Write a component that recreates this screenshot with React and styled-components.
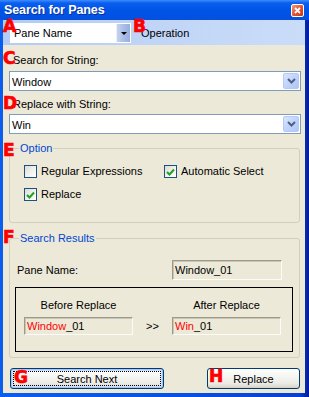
import styled, { createGlobalStyle } from "styled-components"

const GlobalStyle = createGlobalStyle`
  body { margin: 0; background: #fff; }
  * { box-sizing: border-box; }
`

const Frame = styled.div`
  position: relative;
  width: 309px;
  height: 397px;
  display: flex;
  flex-direction: column;
  background: linear-gradient(to right, #0b5ded 0, #0651e3 60%, #0a3fd0 97%, #001c9c 100%);
  font-family: "Liberation Sans", Arial, sans-serif;
  font-size: 11px;
  color: #000;
  overflow: hidden;
`
const TitleBar = styled.div`
  height: 20px;
  flex: none;
  display: flex;
  align-items: center;
  justify-content: space-between;
  padding: 0 5px 0 4px;
  background: linear-gradient(#3d8dfb 0, #0a5ff0 3px, #0054e6 10px, #0252e4 17px, #0a4ed8 20px);
`
const Title = styled.span`
  color: #fff;
  font-weight: bold;
  font-size: 12.5px;
  letter-spacing: -0.1px;
  text-shadow: 1px 1px 0 #0a2f9c;
`
const CloseBox = styled.div`
  width: 13px;
  height: 13px;
  border: 1px solid #fff;
  border-radius: 2px;
  background: linear-gradient(135deg, #f29a7c, #e0502a 55%, #c8381a);
  display: flex;
  align-items: center;
  justify-content: center;
`
const Client = styled.div`
  flex: 1;
  margin: 0 4px 4px 3px;
  display: flex;
  flex-direction: column;
`
const Toolbar = styled.div`
  height: 25px;
  flex: none;
  display: flex;
  align-items: flex-start;
  padding: 3px 0 0 7px;
  background: linear-gradient(to right, #b4cbf3, #c2d7f7 60%, #cadcf8);
`
const ToolCombo = styled.div`
  width: 121px;
  height: 20px;
  display: flex;
  align-items: stretch;
  background: #fff;
  padding: 1px;
`
const ComboText = styled.div`
  flex: 1;
  line-height: 18px;
  padding-left: ${p => p.$pad || 3}px;
  white-space: nowrap;
`
const ToolDrop = styled.div`
  width: 14px;
  display: flex;
  align-items: center;
  justify-content: center;
  background: linear-gradient(to right, #c5d3ef, #a9bde6 50%, #97aedc);
  border-left: 1px solid #e8eefb;
`
const Arrow = styled.span`
  width: 0;
  height: 0;
  border-left: 3px solid transparent;
  border-right: 3px solid transparent;
  border-top: 3px solid #000;
`
const Operation = styled.div`
  margin-left: 10px;
  line-height: 20px;
`
const Body = styled.div`
  flex: 1;
  background: #ece9d8;
  padding: 9px 5px 0 6px;
  display: flex;
  flex-direction: column;
`
const Label = styled.div`
  line-height: 13px;
  padding-left: 4px;
  margin-top: ${p => p.$top || 0}px;
`
const Combo = styled.div`
  height: 20px;
  margin-top: ${p => p.$top}px;
  margin-right: -1px;
  display: flex;
  background: #fff;
  border: 1px solid #7f9db9;
  padding: 1px;
`
const DropButton = styled.div`
  width: 16px;
  border: 1px solid #b5c9f6;
  border-radius: 2px;
  background: linear-gradient(135deg, #dbe6fd, #c0d3fb 50%, #b1c6f7);
  display: flex;
  align-items: center;
  justify-content: center;
`
const Group = styled.div`
  position: relative;
  margin-top: ${p => p.$top}px;
  height: ${p => p.$height}px;
  border: 1px solid #d0d0bf;
  border-radius: 3px;
  padding: ${p => p.$pad};
`
const Legend = styled.span`
  position: absolute;
  top: -7px;
  left: 9px;
  padding: 0 1px;
  background: #ece9d8;
  color: #0046d5;
  line-height: 13px;
`
const OptionGrid = styled.div`
  display: grid;
  grid-template-columns: 140px auto;
  row-gap: 10px;
`
const CheckRow = styled.label`
  display: flex;
  align-items: center;
  gap: 4px;
  line-height: 13px;
`
const Box = styled.span`
  width: 13px;
  height: 13px;
  border: 1px solid #1c5180;
  background: linear-gradient(135deg, #dcdcd7, #f3f3ef 60%, #fff);
  display: flex;
  align-items: center;
  justify-content: center;
`
const PaneRow = styled.div`
  display: grid;
  grid-template-columns: 155px 110px;
  align-items: center;
  padding-left: 7px;
`
const Field = styled.div`
  height: ${p => p.$height}px;
  border: 1px solid;
  border-color: #9d9a8a #fbfbf8 #fbfbf8 #9d9a8a;
  box-shadow: inset 1px 1px 0 #c9c6b6;
  background: #ece9d8;
  padding-left: 2px;
  line-height: ${p => p.$height - 2}px;
  white-space: nowrap;
`
const Red = styled.span`
  color: #f00;
`
const CompareBox = styled.div`
  margin: 7px 0 0 5px;
  width: 278px;
  height: 65px;
  border: 1px solid #000;
  display: grid;
  grid-template-columns: 109px 39px 109px;
  grid-template-rows: 13px 18px;
  row-gap: 5px;
  padding: 11px 0 0 8px;
`
const ColHead = styled.div`
  text-align: center;
  line-height: 13px;
`
const Arrows = styled.div`
  text-align: center;
  line-height: 18px;
`
const ButtonRow = styled.div`
  margin-top: 10px;
  display: flex;
  justify-content: space-between;
  padding-left: 1px;
`
const Button = styled.div`
  position: relative;
  width: ${p => p.$width}px;
  height: 21px;
  border: 1px solid #003c74;
  border-radius: 3px;
  background: linear-gradient(#ffffff, #f4f4f0 45%, #ecebe6 75%, #d8d4ca);
  box-shadow: ${p => p.$default ? "inset 0 0 0 1px #a9c4f5, inset 0 0 0 2px #cde0fb" : "inset 0 -1px 0 #d6d0c5"};
  display: flex;
  align-items: center;
  justify-content: center;
  &::after {
    content: "";
    display: ${p => p.$default ? "block" : "none"};
    position: absolute;
    inset: 2px;
    border: 1px dotted #000;
  }
`
const Mark = styled.span`
  position: absolute;
  left: ${p => p.$x}px;
  top: ${p => p.$y}px;
  font-family: "DejaVu Sans", sans-serif;
  font-weight: 900;
  font-size: 17px;
  line-height: 17px;
  color: #f00;
  -webkit-text-stroke: 0.7px #f00;
`

const Chevron = () => (
  <svg width="9" height="6" viewBox="0 0 9 6">
    <path d="M1 1 L4.5 4.5 L8 1" fill="none" stroke="#4d6185" strokeWidth="2" />
  </svg>
)

const Check = () => (
  <svg width="9" height="8" viewBox="0 0 9 8">
    <path d="M1 4 L3.5 6.5 L8 1.5" fill="none" stroke="#21a121" strokeWidth="2" />
  </svg>
)

const CheckItem = ({ checked, children }) => (
  <CheckRow>
    <Box>{checked && <Check />}</Box>
    {children}
  </CheckRow>
)

const marks = [
  ["A", 3, 18], ["B", 133, 18], ["C", 3, 50], ["D", 3, 95],
  ["E", 3, 142], ["F", 3, 229], ["G", 14, 369], ["H", 209, 368],
]

const App = () => {
  return (
    <Frame>
      <GlobalStyle />
      <TitleBar>
        <Title>Search for Panes</Title>
        <CloseBox>
          <svg width="7" height="7" viewBox="0 0 7 7">
            <path d="M1 1 L6 6 M6 1 L1 6" stroke="#fff" strokeWidth="1.8" />
          </svg>
        </CloseBox>
      </TitleBar>
      <Client>
        <Toolbar>
          <ToolCombo>
            <ComboText>Pane Name</ComboText>
            <ToolDrop><Arrow /></ToolDrop>
          </ToolCombo>
          <Operation>Operation</Operation>
        </Toolbar>
        <Body>
          <Label>Search for String:</Label>
          <Combo $top={4}>
            <ComboText $pad={1}>Window</ComboText>
            <DropButton><Chevron /></DropButton>
          </Combo>
          <Label $top={7}>Replace with String:</Label>
          <Combo $top={3}>
            <ComboText $pad={1}>Win</ComboText>
            <DropButton><Chevron /></DropButton>
          </Combo>
          <Group $top={14} $height={75} $pad="16px 0 0 14px">
            <Legend>Option</Legend>
            <OptionGrid>
              <CheckItem>Regular Expressions</CheckItem>
              <CheckItem checked>Automatic Select</CheckItem>
              <CheckItem checked>Replace</CheckItem>
            </OptionGrid>
          </Group>
          <Group $top={15} $height={120} $pad="21px 0 0 0">
            <Legend>Search Results</Legend>
            <PaneRow>
              <span>Pane Name:</span>
              <Field $height={20}>Window_01</Field>
            </PaneRow>
            <CompareBox>
              <ColHead>Before Replace</ColHead>
              <span />
              <ColHead>After Replace</ColHead>
              <Field $height={18}><Red>Window</Red>_01</Field>
              <Arrows>&gt;&gt;</Arrows>
              <Field $height={18}><Red>Win</Red>_01</Field>
            </CompareBox>
          </Group>
          <ButtonRow>
            <Button $width={154} $default>Search Next</Button>
            <Button $width={93}>Replace</Button>
          </ButtonRow>
        </Body>
      </Client>
      {marks.map(([t, x, y]) => (
        <Mark key={t} $x={x} $y={y}>{t}</Mark>
      ))}
    </Frame>
  )
}

export default App
